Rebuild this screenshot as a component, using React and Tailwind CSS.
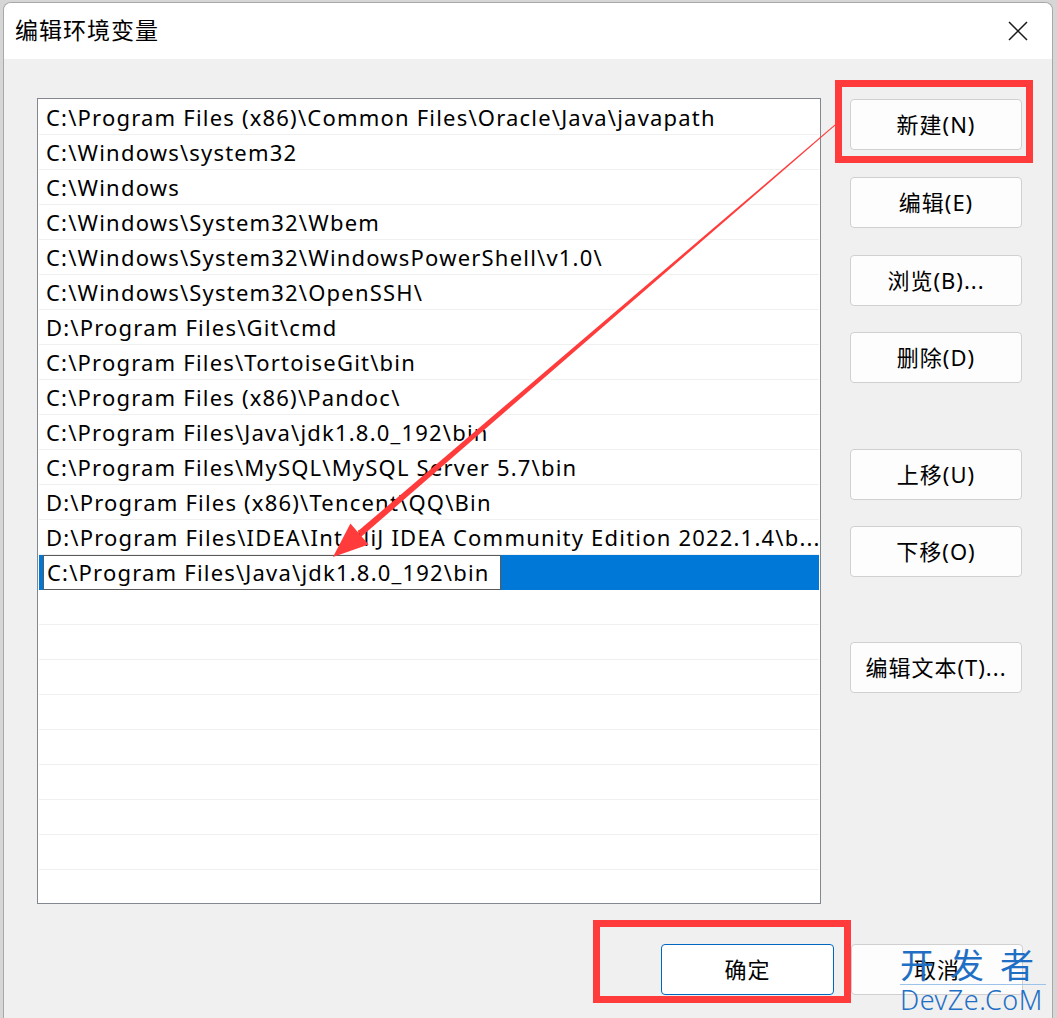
import React from 'react';

const paths = [
  'C:\\Program Files (x86)\\Common Files\\Oracle\\Java\\javapath',
  'C:\\Windows\\system32',
  'C:\\Windows',
  'C:\\Windows\\System32\\Wbem',
  'C:\\Windows\\System32\\WindowsPowerShell\\v1.0\\',
  'C:\\Windows\\System32\\OpenSSH\\',
  'D:\\Program Files\\Git\\cmd',
  'C:\\Program Files\\TortoiseGit\\bin',
  'C:\\Program Files (x86)\\Pandoc\\',
  'C:\\Program Files\\Java\\jdk1.8.0_192\\bin',
  'C:\\Program Files\\MySQL\\MySQL Server 5.7\\bin',
  'D:\\Program Files (x86)\\Tencent\\QQ\\Bin',
  'D:\\Program Files\\IDEA\\IntelliJ IDEA Community Edition 2022.1.4\\b...',
];

const font = { fontFamily: '"Noto Sans", "Noto Sans CJK SC", sans-serif' };

const SideButton = ({ label, className = '' }) => (
  <button
    className={`w-[172px] h-[51px] rounded-[4px] border border-[#d0d0d0] bg-[#fdfdfd] text-[22px] tracking-[1px] text-black flex items-center justify-center ${className}`}
  >
    {label}
  </button>
);

export default function App() {
  const empty = Array.from({ length: 9 });

  return (
    <div className="relative w-[1057px] h-[1018px] overflow-hidden bg-[#d6d6d6] flex" style={font}>
      <div className="w-[3px] shrink-0" />
      <div className="mt-[2px] w-[1050px] shrink-0 flex flex-col rounded-t-[8px] border-r border-t border-l border-[#a8a8a8] bg-[#f0f0f0] overflow-hidden">
        {/* title bar */}
        <div className="h-[56px] shrink-0 bg-white flex items-center justify-between pl-[11px] pr-[23px]">
          <span className="text-[23px] tracking-[1px] text-black leading-none -mt-[2px]">编辑环境变量</span>
          <svg width="22" height="22" viewBox="0 0 22 22" className="text-[#1a1a1a]">
            <path d="M2 2 L20 20 M20 2 L2 20" stroke="currentColor" strokeWidth="1.5" fill="none" />
          </svg>
        </div>

        {/* body */}
        <div className="flex pl-[33px] pt-[39px]">
          <div className="w-[784px] h-[806px] shrink-0 border border-[#828790] bg-white pt-[1px] px-[1px] overflow-hidden">
            {paths.map((p) => (
              <div key={p} className="h-[35px] border-b border-[#f0f0f0] flex items-center pl-[7px] text-[22px] tracking-[1.2px] text-black whitespace-nowrap">
                {p}
              </div>
            ))}
            <div className="h-[35px] bg-[#0078d7] flex items-center pl-[4px]">
              <div className="h-[35px] w-[458px] bg-white border border-[#5a5a5a] flex items-center pl-[3px] text-[22px] tracking-[1.2px] text-black whitespace-nowrap">
                C:\Program Files\Java\jdk1.8.0_192\bin
              </div>
            </div>
            {empty.map((_, i) => (
              <div key={i} className="h-[35px] border-b border-[#f0f0f0]" />
            ))}
          </div>

          <div className="ml-[29px] flex flex-col pt-[1px]">
            <SideButton label="新建(N)" />
            <SideButton label="编辑(E)" className="mt-[27px]" />
            <SideButton label="浏览(B)..." className="mt-[27px]" />
            <SideButton label="删除(D)" className="mt-[26px]" />
            <SideButton label="上移(U)" className="mt-[66px]" />
            <SideButton label="下移(O)" className="mt-[26px]" />
            <SideButton label="编辑文本(T)..." className="mt-[65px]" />
          </div>
        </div>

        {/* footer */}
        <div className="flex justify-end gap-[17px] pr-[29px] pt-[40px]">
          <button className="w-[173px] h-[51px] rounded-[4px] border border-[#0067c0] bg-white text-[22px] tracking-[1px] text-black flex items-center justify-center">
            确定
          </button>
          <button className="w-[172px] h-[51px] rounded-[4px] border border-[#d0d0d0] bg-[#fdfdfd] text-[22px] tracking-[1px] text-black flex items-center justify-center">
            取消
          </button>
        </div>
      </div>

      {/* annotations */}
      <div className="absolute left-[835px] top-[80px] w-[198px] h-[83px] border-[7px] border-[#ff3b3b]" />
      <div className="absolute left-[593px] top-[920px] w-[258px] h-[83px] border-[7px] border-[#ff3b3b]" />
      <svg className="absolute left-0 top-0 pointer-events-none" width="1057" height="1018">
        <polygon points="835.2,125.4 834.8,124.6 357.8,531.3 361.2,536.7" fill="#ff3b3b" />
        <polygon points="333,557 368.6,544.6 350.4,523.4" fill="#ff3b3b" />
      </svg>

      {/* watermark */}
      <div className="absolute left-[900px] top-[944px] flex flex-col text-[#1f6fc5]">
        <div className="text-[34px] leading-[40px] tracking-[16px] border-b border-[#9cc3ea] w-[146px] whitespace-nowrap" style={{ fontFamily: '"Noto Sans CJK SC", sans-serif' }}>
          开发者
        </div>
        <div className="text-[27px] leading-[30px] font-light whitespace-nowrap tracking-[0.5px]">DevZe.CoM</div>
      </div>
    </div>
  );
}
